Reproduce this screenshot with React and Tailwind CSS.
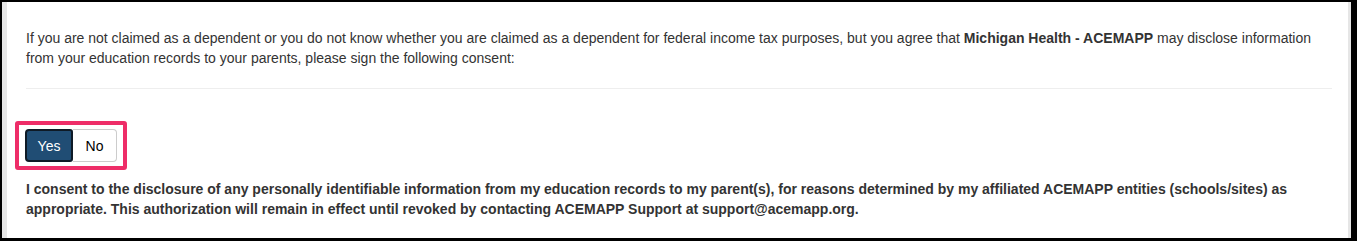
import React, { useState } from "react";

const App = () => {
  const [consent, setConsent] = useState("yes");

  return (
    <div
      className="w-[1357px] h-[241px] bg-black pt-[2px] pl-[2px] pr-[6px] pb-[3px]"
      style={{ fontFamily: '"Liberation Sans", Arial, sans-serif' }}
    >
      <div className="h-full bg-white border-l-[5px] border-r-[3px] border-[#e6e6e6] pl-[19px] pr-[16px] text-[14px] leading-[20px] text-[#333333]">
        {/* PARENT DISCLOSURE TEXT */}
        <div className="pt-[26px]">
          <span>
            If you are not claimed as a dependent or you do not know whether
            you are claimed as a dependent for federal income tax purposes, but
            you agree that{" "}
          </span>
          <b>Michigan Health - ACEMAPP</b>
          <span>
            {" "}
            may disclose information from your education records to your
            parents, please sign the following consent:
          </span>
        </div>
        <hr className="mt-[20px] border-t border-[#eeeeee]" />

        {/* YES / NO TOGGLE */}
        <div className="mt-[32px] ml-[-11px] inline-flex rounded-[3px] border-[4px] border-[#ee2d68] px-[6px] py-[4px]">
          <div className="flex h-[33px]">
            <button
              type="button"
              onClick={() => setConsent("yes")}
              className={`w-[48px] rounded-l-[4px] border-2 ${
                consent === "yes"
                  ? "bg-[#204d74] border-[#0e1a26] text-white rounded-r-[3px]"
                  : "bg-white border-[#cccccc] text-[#333333]"
              }`}
            >
              Yes
            </button>
            <button
              type="button"
              onClick={() => setConsent("no")}
              className={`w-[44px] rounded-r-[4px] ${
                consent === "no"
                  ? "bg-[#204d74] border-2 border-[#0e1a26] text-white"
                  : "bg-white border border-l-0 border-[#cccccc] text-black"
              }`}
            >
              No
            </button>
          </div>
        </div>

        {/* CONSENT STATEMENT */}
        <p className="mt-[9px] font-bold">
          I consent to the disclosure of any personally identifiable information
          from my education records to my parent(s), for reasons determined by
          my affiliated ACEMAPP entities (schools/sites) as appropriate. This
          authorization will remain in effect until revoked by contacting
          ACEMAPP Support at support@acemapp.org.
        </p>
      </div>
    </div>
  );
};

export default App;
